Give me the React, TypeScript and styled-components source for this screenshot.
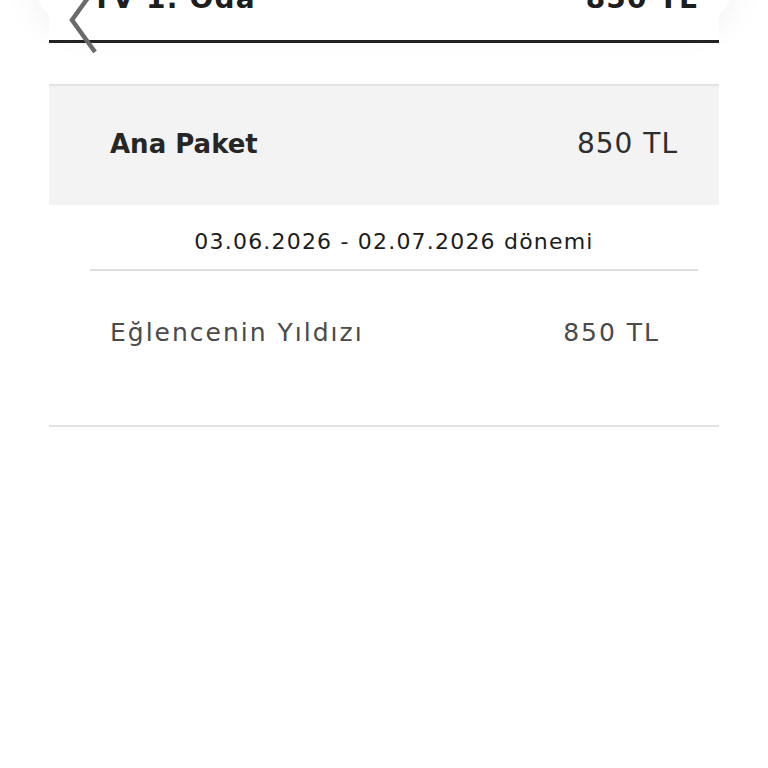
import React from 'react';
import styled, { createGlobalStyle } from 'styled-components';

const GlobalStyle = createGlobalStyle`
  html, body {
    margin: 0;
    padding: 0;
    background: #fff;
    overflow: hidden;
  }
  body {
    font-family: "DejaVu Sans", "Noto Sans", sans-serif;
    color: #222;
  }
`;

const Page = styled.div`
  position: relative;
  width: 768px;
  height: 768px;
  overflow: hidden;
  background: #fff;
`;

const TopBar = styled.div`
  position: absolute;
  top: -70px;
  left: 36px;
  width: 696px;
  height: 96px;
  border-radius: 40px;
  background: #fff;
  box-shadow: 0 0 36px rgba(0, 0, 0, 0.08);
`;

const BackIcon = styled.svg`
  position: absolute;
  left: 60px;
  top: -16px;
  width: 44px;
  height: 72px;
  z-index: 3;
`;

const Content = styled.div`
  position: relative;
  z-index: 2;
  margin: 0 49px;
`;

const Header = styled.div`
  display: flex;
  justify-content: space-between;
  margin-top: -18px;
  padding: 0 21px 24px 43px;
  background: #fff;
  border-bottom: 3px solid #232323;
  font-size: 28px;
  line-height: 34px;
  font-weight: 700;
  letter-spacing: 1.2px;
  color: #1e1e1e;
`;

const PackageBox = styled.div`
  margin-top: 41px;
  height: 115px;
  display: flex;
  align-items: center;
  justify-content: space-between;
  padding: 0 41px 4px 61px;
  background: #f3f3f3;
  border-top: 2px solid #e3e3e3;
`;

const PackageName = styled.span`
  font-size: 26px;
  font-weight: 700;
  color: #262626;
`;

const Price = styled.span<{ $muted?: boolean }>`
  font-size: ${(p) => (p.$muted ? 25 : 28)}px;
  letter-spacing: ${(p) => (p.$muted ? 2 : 1)}px;
  color: ${(p) => (p.$muted ? '#4a4a4a' : '#2e2e2e')};
`;

const Section = styled.div`
  border-bottom: 2px solid #e2e2e2;
`;

const Period = styled.div`
  margin: 0 21px 0 41px;
  padding: 23px 0 13px;
  text-align: center;
  font-size: 22px;
  line-height: 28px;
  letter-spacing: 1.2px;
  color: #1c1c1c;
  border-bottom: 2px solid #dedede;
`;

const ItemRow = styled.div`
  margin: 0 21px 0 41px;
  padding: 48px 38px 78px 20px;
  display: flex;
  justify-content: space-between;
  align-items: center;
  line-height: 28px;
`;

const ItemName = styled.span`
  font-size: 25px;
  letter-spacing: 2px;
  color: #4a4a4a;
`;

export default function App() {
  return (
    <Page>
      <GlobalStyle />
      <TopBar />
      <BackIcon viewBox="0 0 44 72">
        <polyline
          points="35,4 12,36 35,68"
          fill="none"
          stroke="#6a6a6a"
          strokeWidth="4.5"
        />
      </BackIcon>
      <Content>
        <Header>
          <span>TV 1. Oda</span>
          <span>850 TL</span>
        </Header>
        <PackageBox>
          <PackageName>Ana Paket</PackageName>
          <Price>850 TL</Price>
        </PackageBox>
        <Section>
          <Period>03.06.2026 - 02.07.2026 dönemi</Period>
          <ItemRow>
            <ItemName>Eğlencenin Yıldızı</ItemName>
            <Price $muted>850 TL</Price>
          </ItemRow>
        </Section>
      </Content>
    </Page>
  );
}
